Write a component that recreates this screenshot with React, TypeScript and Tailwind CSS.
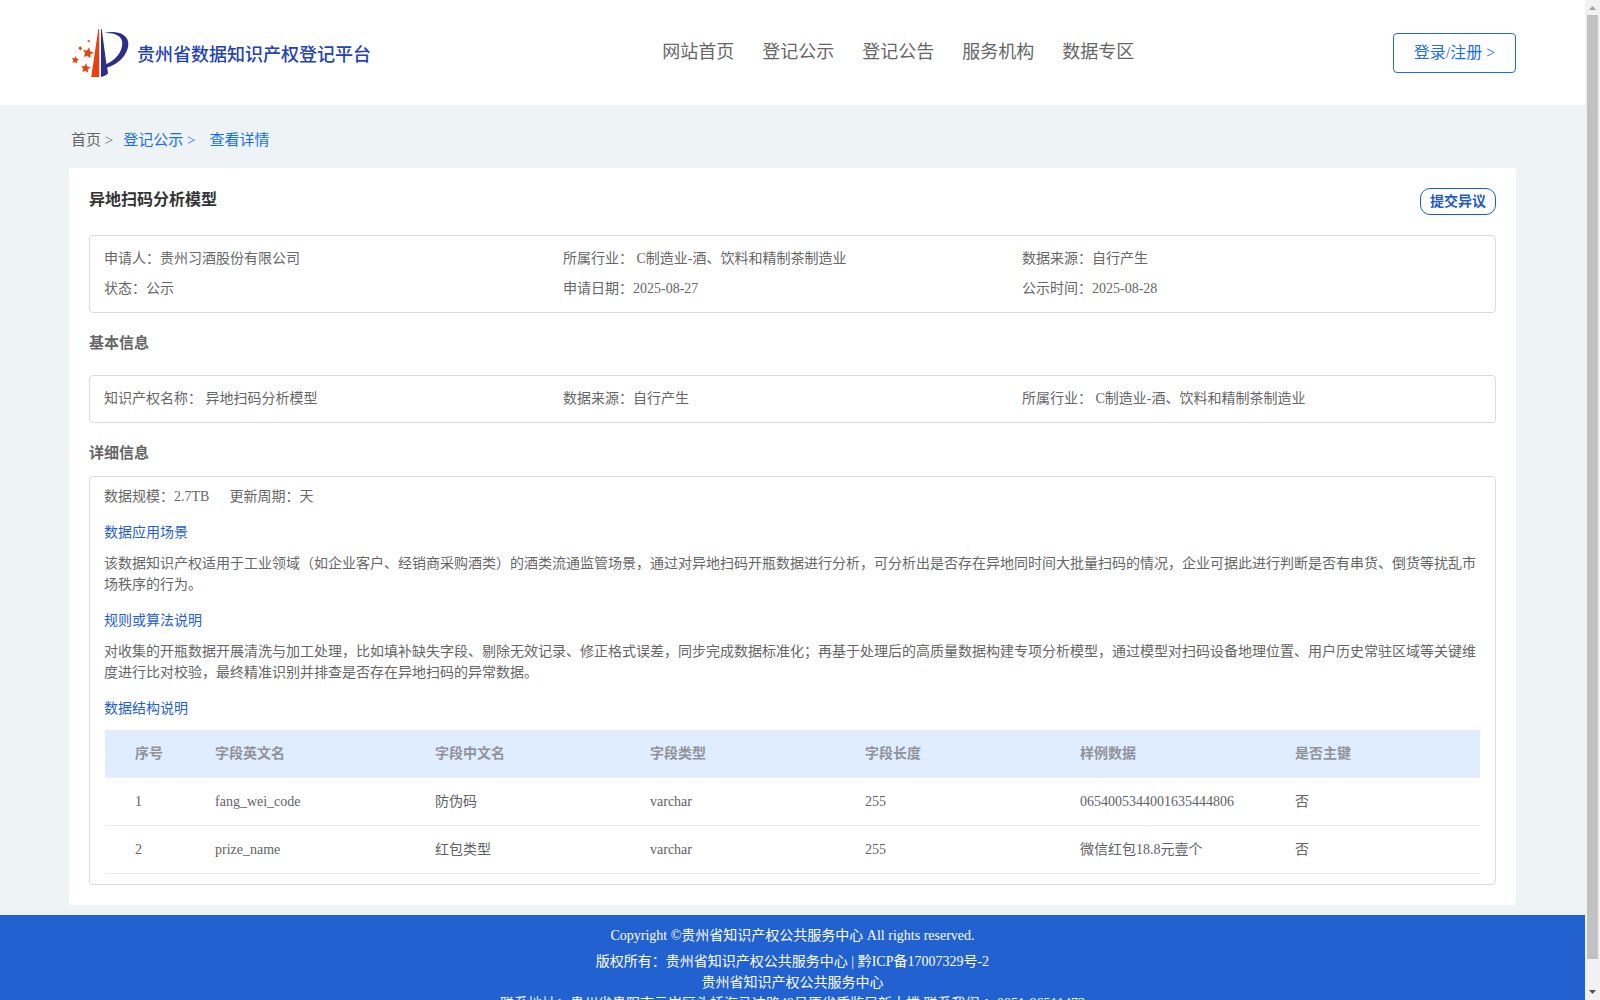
import React from "react";

const navItems = ["网站首页", "登记公示", "登记公告", "服务机构", "数据专区"];

const columns = [
  { title: "序号", width: "w-[100px]" },
  { title: "字段英文名", width: "w-[220px]" },
  { title: "字段中文名", width: "w-[215px]" },
  { title: "字段类型", width: "w-[215px]" },
  { title: "字段长度", width: "w-[215px]" },
  { title: "样例数据", width: "w-[215px]" },
  { title: "是否主键", width: "" },
];

const rows = [
  ["1", "fang_wei_code", "防伪码", "varchar", "255", "0654005344001635444806", "否"],
  ["2", "prize_name", "红包类型", "varchar", "255", "微信红包18.8元壹个", "否"],
];

function star(cx: number, cy: number, r: number, turn: number) {
  return Array.from({ length: 10 }, (_, i) => {
    const a = ((i * 36 + turn - 90) * Math.PI) / 180;
    const d = i % 2 ? r * 0.48 : r;
    return `${(cx + d * Math.cos(a)).toFixed(2)},${(cy + d * Math.sin(a)).toFixed(2)}`;
  }).join(" ");
}

function Logo() {
  return (
    <svg width="58" height="50" viewBox="0 0 58 50" aria-hidden="true" className="shrink-0">
      <g fill="#e8430f">
        <path d="M27.3 1H28.2V49H20.2Z" />
        <polygon points={star(17, 25, 5.8, 12)} />
        <polygon points={star(4.2, 32, 4, 8)} />
        <polygon points={star(14.6, 40.3, 5, 6)} />
        <polygon points={star(9.2, 20.2, 2.5, 25)} />
        <polygon points={star(17.8, 13, 1.6, 20)} />
      </g>
      <path
        fill="#2a3089"
        d="M30 1H30.7L35.4 36C44 32.5 51.5 24 51.3 15C51.1 7.500 43.500 4.600 33.200 5C45 2 57 5.500 57.300 15.500C57.600 26 47.500 36.500 36.200 39.500L37 45.500C35 47.300 32.500 48.300 30 49Z"
      />
    </svg>
  );
}

function Header() {
  return (
    <header className="flex h-[105px] items-center bg-white px-[69px]">
      <a href="#" className="flex w-[41%] shrink-0 items-center gap-2 pl-0.5 text-lg font-medium text-[#2342b4]">
        <Logo />
        <span className="whitespace-nowrap pt-1">贵州省数据知识产权登记平台</span>
      </a>
      <nav className="flex gap-7 pb-0.5 text-lg text-[#666]">
        {navItems.map((item) => (
          <a key={item} href="#" className="whitespace-nowrap">
            {item}
          </a>
        ))}
      </nav>
      <div className="flex flex-1 justify-end">
        <button type="button" className="h-10 w-[123px] rounded-[4px] border border-[#1a6eea] text-base text-[#1a6eea]">
          登录/注册 &gt;
        </button>
      </div>
    </header>
  );
}

function Breadcrumb() {
  return (
    <nav aria-label="面包屑" className="flex h-[63px] items-center pb-1 pl-0.5 pt-3 text-[15px] leading-[21px] text-[#146ef5]">
      <a href="#" className="mr-2.5 text-[#666]">首页 &gt;</a>
      <a href="#" className="mr-3.5">登记公示 &gt;</a>
      <a href="#">查看详情</a>
    </nav>
  );
}

function InfoBox({ items }: { items: [string, string][] }) {
  return (
    <dl className="grid grid-cols-3 rounded-[4px] border border-[#dcdcdc] px-3.5 py-2 leading-[30px]">
      {items.map(([label, value]) => (
        <div key={label} className="flex">
          <dt>{label}：</dt>
          <dd className="whitespace-pre">{value}</dd>
        </div>
      ))}
    </dl>
  );
}

function Section({ title, text }: { title: string; text: string }) {
  return (
    <section>
      <h4 className="mb-2.5 mt-[15px] text-[#1f60d0]">{title}</h4>
      <p>{text}</p>
    </section>
  );
}

function StructureTable() {
  return (
    <div className="px-px">
      <table className="w-full table-fixed border-collapse text-left">
        <thead>
          <tr className="h-[47px] border-b border-[#ebeef5] bg-[#e0edff] text-[#909399]">
            {columns.map((c) => (
              <th key={c.title} scope="col" className={`${c.width} pl-2.5 font-bold first:pl-[30px]`}>
                {c.title}
              </th>
            ))}
          </tr>
        </thead>
        <tbody className="text-[#606266]">
          {rows.map((row) => (
            <tr key={row[0]} className="h-12 border-b border-[#ebebeb]">
              {row.map((cell, i) => (
                <td key={i} className="pl-2.5 first:pl-[30px]">
                  {cell}
                </td>
              ))}
            </tr>
          ))}
        </tbody>
      </table>
    </div>
  );
}

function Footer() {
  return (
    <footer className="mt-2.5 bg-[#2161d0] py-2.5 text-center text-sm leading-[21px] text-white">
      <p className="mb-[5px]">Copyright ©贵州省知识产权公共服务中心 All rights reserved.</p>
      <p>
        版权所有：贵州省知识产权公共服务中心 | <a href="#">黔ICP备17007329号-2</a>
      </p>
      <p>贵州省知识产权公共服务中心</p>
      <p>联系地址：贵州省贵阳市云岩区头桥海马冲路49号原省质监局新大楼 联系我们 ：0851-86511473</p>
    </footer>
  );
}

function Scrollbar() {
  return (
    <div aria-hidden="true" className="flex w-[15px] shrink-0 flex-col items-center bg-[#f1f1f1]">
      <svg width="15" height="15" viewBox="0 0 15 15" className="shrink-0">
        <path d="M4 10L7.500 6L11 10Z" fill="#a3a3a3" />
      </svg>
      <div className="w-full flex-1 px-0.5 pb-[26px]">
        <div className="h-full bg-[#c1c1c1]" />
      </div>
      <svg width="15" height="15" viewBox="0 0 15 15" className="shrink-0">
        <path d="M4 5L7.500 9L11 5Z" fill="#505050" />
      </svg>
    </div>
  );
}

export default function App() {
  return (
    <div className="flex h-screen overflow-hidden bg-[#eef3f6] font-['Liberation_Serif','Noto_Sans_CJK_SC',serif] text-sm text-[#666]">
      <div className="min-w-0 flex-1 overflow-hidden">
        <Header />
        <div className="px-[69px]">
          <Breadcrumb />
          <main className="bg-white p-5 leading-[21px]">
            <div className="mb-5 flex items-start justify-between">
              <h1 className="text-base font-bold text-[#333]">异地扫码分析模型</h1>
              <button type="button" className="h-[27px] w-[76px] rounded-[10px] border border-[#1f5bc4] font-bold leading-5 text-[#1f5bc4]">
                提交异议
              </button>
            </div>
            <InfoBox
              items={[
                ["申请人", "贵州习酒股份有限公司"],
                ["所属行业", " C制造业-酒、饮料和精制茶制造业"],
                ["数据来源", "自行产生"],
                ["状态", "公示"],
                ["申请日期", "2025-08-27"],
                ["公示时间", "2025-08-28"],
              ]}
            />
            <h2 className="mb-[21px] mt-5 text-[15px] font-bold">基本信息</h2>
            <InfoBox
              items={[
                ["知识产权名称", " 异地扫码分析模型"],
                ["数据来源", "自行产生"],
                ["所属行业", " C制造业-酒、饮料和精制茶制造业"],
              ]}
            />
            <h2 className="mb-3 mt-5 text-[15px] font-bold">详细信息</h2>
            <div className="rounded-[4px] border border-[#dcdcdc] px-3.5 pb-2.5 pt-[9px]">
              <p className="flex gap-5">
                <span>数据规模：2.7TB</span>
                <span>更新周期：天</span>
              </p>
              <Section
                title="数据应用场景"
                text="该数据知识产权适用于工业领域（如企业客户、经销商采购酒类）的酒类流通监管场景，通过对异地扫码开瓶数据进行分析，可分析出是否存在异地同时间大批量扫码的情况，企业可据此进行判断是否有串货、倒货等扰乱市场秩序的行为。"
              />
              <Section
                title="规则或算法说明"
                text="对收集的开瓶数据开展清洗与加工处理，比如填补缺失字段、剔除无效记录、修正格式误差，同步完成数据标准化；再基于处理后的高质量数据构建专项分析模型，通过模型对扫码设备地理位置、用户历史常驻区域等关键维度进行比对校验，最终精准识别并排查是否存在异地扫码的异常数据。"
              />
              <h4 className="mb-[11px] mt-[15px] text-[#1f60d0]">数据结构说明</h4>
              <StructureTable />
            </div>
          </main>
        </div>
        <Footer />
      </div>
      <Scrollbar />
    </div>
  );
}
